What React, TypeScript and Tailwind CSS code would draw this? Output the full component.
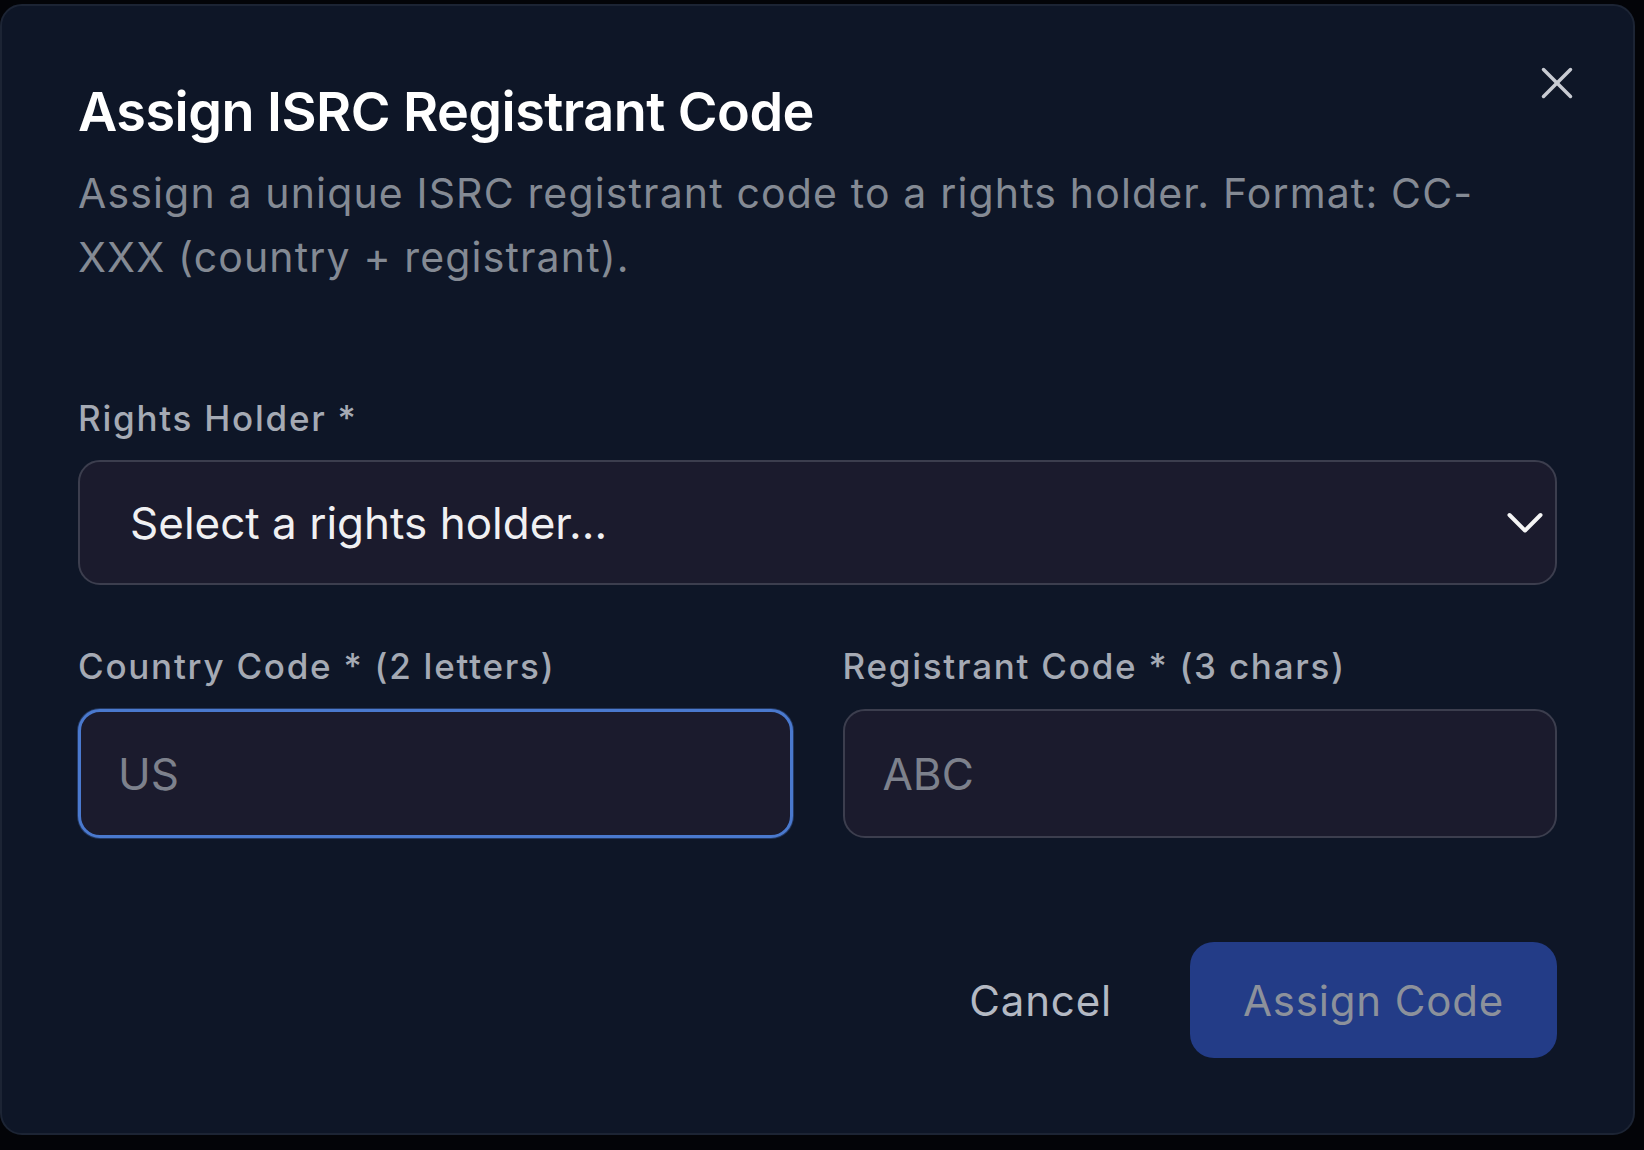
import React, { useState } from 'react';

export default function App() {
  const [country, setCountry] = useState('');
  const [registrant, setRegistrant] = useState('');

  return (
    <div className="min-h-screen bg-[#030408] pt-[4px] font-['Inter','Liberation_Sans',sans-serif]">
      <div className="relative w-[1635px] h-[1131px] rounded-[22px] border-2 border-[#1c2434] bg-[#0e1627] px-[76px] pt-[73px]">
        {/* Close */}
        <button
          aria-label="Close"
          className="absolute right-[60px] top-[61px] w-[32px] h-[32px] text-[#c8cbd2]"
        >
          <svg viewBox="0 0 32 32" width="32" height="32" fill="none" stroke="currentColor" strokeWidth="3.5" strokeLinecap="round">
            <line x1="2.5" y1="2.5" x2="29.5" y2="29.5" />
            <line x1="29.5" y1="2.5" x2="2.5" y2="29.5" />
          </svg>
        </button>

        {/* Header */}
        <h2 className="text-[54px] leading-[66px] font-semibold text-white tracking-[-0.01em]">
          Assign ISRC Registrant Code
        </h2>
        <p className="mt-[16px] text-[41px] leading-[64px] tracking-[0.028em] text-[#848a94]">
          Assign a unique ISRC registrant code to a rights holder. Format: CC-XXX (country + registrant).
        </p>

        {/* Rights holder */}
        <div className="mt-[105px] flex flex-col">
          <label className="text-[35px] leading-[48px] tracking-[0.05em] font-medium text-[#a5aab4]">Rights Holder *</label>
          <button className="mt-[18px] h-[125px] w-full rounded-[22px] border-2 border-[#3c3e4e] bg-[#1b1b2d] pl-[50px] pr-[12px] flex items-center justify-between text-left">
            <span className="text-[44px] text-[#f0f0f2]">Select a rights holder...</span>
            <svg viewBox="0 0 36 22" width="36" height="22" fill="none" stroke="#f5f5f5" strokeWidth="4" strokeLinecap="round" strokeLinejoin="round">
              <polyline points="2.5,3 18,18.5 33.5,3" />
            </svg>
          </button>
        </div>

        {/* Codes */}
        <div className="mt-[57px] grid grid-cols-2 gap-x-[50px]">
          <div className="flex flex-col">
            <label className="text-[35px] leading-[48px] tracking-[0.05em] font-medium text-[#a5aab4]">Country Code * (2 letters)</label>
            <input
              value={country}
              onChange={(e) => setCountry(e.target.value)}
              placeholder="US"
              maxLength={2}
              className="mt-[19px] h-[129px] w-full rounded-[22px] border-[3px] border-[#4a79ce] bg-[#1b1b2d] pl-[37px] text-[44px] text-[#f0f0f2] placeholder:text-[#7d818c] outline-none shadow-[0_0_0_1px_rgba(74,121,206,0.35)]"
            />
          </div>
          <div className="flex flex-col">
            <label className="text-[35px] leading-[48px] tracking-[0.05em] font-medium text-[#a5aab4]">Registrant Code * (3 chars)</label>
            <input
              value={registrant}
              onChange={(e) => setRegistrant(e.target.value)}
              placeholder="ABC"
              maxLength={3}
              className="mt-[19px] h-[129px] w-full rounded-[22px] border-2 border-[#3c3e4e] bg-[#1b1b2d] pl-[38px] text-[44px] text-[#f0f0f2] placeholder:text-[#7d818c] outline-none"
            />
          </div>
        </div>

        {/* Actions */}
        <div className="mt-[104px] flex justify-end gap-[25px]">
          <button className="h-[116px] px-[53px] rounded-[24px] text-[42px] tracking-[0.02em] text-[#b4b9c3]">Cancel</button>
          <button
            disabled={!country || !registrant}
            className="h-[116px] w-[367px] rounded-[24px] bg-[#233c87] text-[42px] tracking-[0.02em] text-[#8c919b] flex items-center justify-center"
          >
            Assign Code
          </button>
        </div>
      </div>
    </div>
  );
}
